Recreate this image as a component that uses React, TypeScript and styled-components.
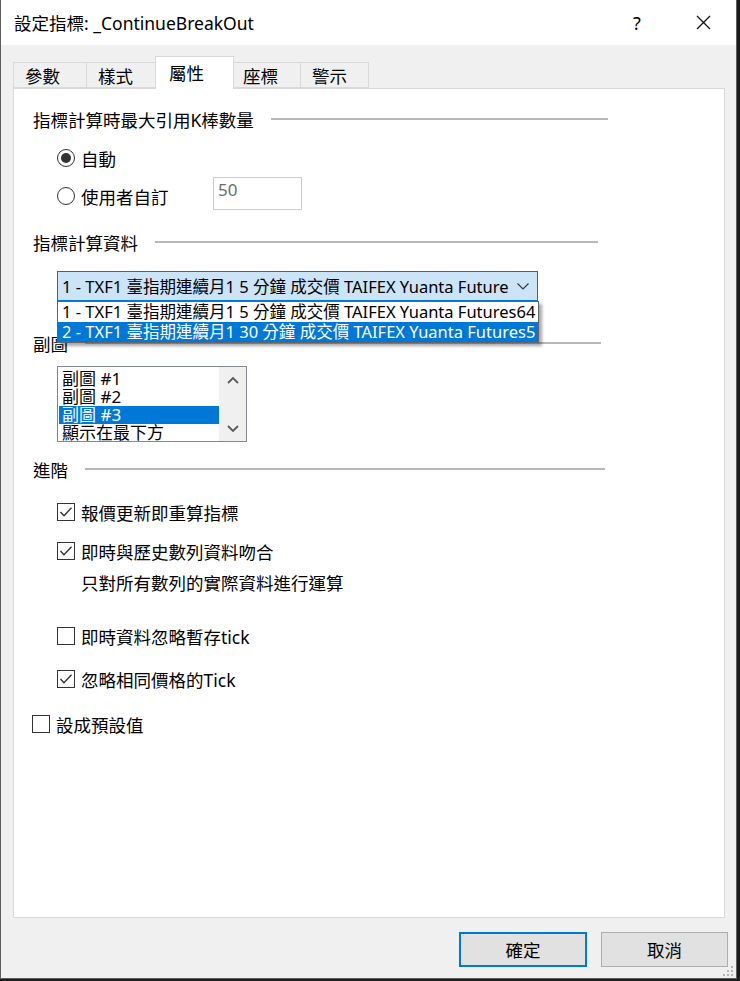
import React from 'react'
import styled, { createGlobalStyle } from 'styled-components'

const GlobalStyle = createGlobalStyle`
  html, body {
    margin: 0;
    padding: 0;
    background: #1c1c1c;
  }
  body {
    font-family: "Noto Sans", "Noto Sans CJK TC", sans-serif;
    color: #000;
  }
  * {
    box-sizing: border-box;
  }
`

const Screen = styled.div`
  width: 740px;
  height: 981px;
  overflow: hidden;
  background: #1c1c1c;
`

const Window = styled.div`
  position: relative;
  width: 737px;
  height: 979px;
  display: flex;
  flex-direction: column;
  background: #f0f0f0;
  border: 1px solid #5e5e5e;
  border-top: none;
`

const TitleBar = styled.div`
  height: 45px;
  flex: none;
  display: flex;
  align-items: center;
  background: #fff;
  padding-left: 13px;
`

const TitleText = styled.div`
  flex: 1;
  font-size: 17.5px;
  line-height: 22px;
  white-space: nowrap;
`

const CaptionButton = styled.div`
  width: 66px;
  height: 45px;
  display: flex;
  align-items: center;
  justify-content: center;
  font-size: 18px;
`

const Body = styled.div`
  flex: 1;
  display: flex;
  flex-direction: column;
  padding: 12px 11px 0 12px;
`

const TabStrip = styled.div`
  height: 31px;
  flex: none;
  display: flex;
  align-items: flex-end;
`

const Tab = styled.div<{ $width: number; $active?: boolean }>`
  position: relative;
  width: ${p => (p.$active ? p.$width + 3 : p.$width)}px;
  height: ${p => (p.$active ? 33 : 26)}px;
  margin-left: ${p => (p.$active ? -2 : -1)}px;
  margin-right: ${p => (p.$active ? -2 : 0)}px;
  margin-bottom: ${p => (p.$active ? -1 : 0)}px;
  z-index: ${p => (p.$active ? 2 : 1)};
  display: flex;
  align-items: center;
  padding-left: ${p => (p.$active ? 13 : 11)}px;
  padding-bottom: ${p => (p.$active ? 1 : 0)}px;
  background: ${p => (p.$active ? '#fff' : '#f0f0f0')};
  border: 1px solid #d9d9d9;
  border-bottom: ${p => (p.$active ? 'none' : '1px solid #d9d9d9')};
  font-size: 17.5px;
  &:first-child {
    margin-left: ${p => (p.$active ? -2 : 0)}px;
  }
`

const Panel = styled.div`
  flex: 1;
  position: relative;
  background: #fff;
  border: 1px solid #d9d9d9;
  padding-left: 19px;
  display: flex;
  flex-direction: column;
`

const Header = styled.div<{ $top: number; $end: number }>`
  display: flex;
  align-items: center;
  gap: 17px;
  height: 20px;
  margin-top: ${p => p.$top}px;
  width: ${p => p.$end - 33}px;
  font-size: 17.5px;
  white-space: nowrap;
`

const HeaderLine = styled.div`
  flex: 1;
  height: 2px;
  background: #b8b8b8;
`

const Row = styled.div<{ $top: number; $indent?: number; $height?: number }>`
  display: flex;
  align-items: flex-start;
  margin-top: ${p => p.$top}px;
  margin-left: ${p => p.$indent ?? 24}px;
  height: ${p => p.$height ?? 20}px;
`

const Choice = styled.label<{ $offset?: number; $width?: number }>`
  display: flex;
  align-items: center;
  gap: 6px;
  height: 20px;
  margin-top: ${p => p.$offset ?? 0}px;
  width: ${p => (p.$width ? `${p.$width}px` : 'auto')};
  font-size: 17.5px;
  white-space: nowrap;
`

const RadioCircle = styled.span<{ $on?: boolean }>`
  width: 18px;
  height: 18px;
  border-radius: 50%;
  border: 1px solid #333;
  display: flex;
  align-items: center;
  justify-content: center;
  flex: none;
  &::after {
    content: '';
    width: 10px;
    height: 10px;
    border-radius: 50%;
    background: ${p => (p.$on ? '#333' : 'transparent')};
  }
`

const CheckBox = styled.span`
  width: 18px;
  height: 18px;
  border: 1px solid #333;
  background: #fff;
  flex: none;
  display: flex;
  align-items: center;
  justify-content: center;
`

const NumberInput = styled.div`
  width: 89px;
  height: 33px;
  border: 1px solid #cccccc;
  background: #fff;
  color: #6d6d6d;
  font-size: 17px;
  line-height: 20px;
  padding: 2px 0 0 4px;
`

const SubText = styled.div`
  margin-top: 11px;
  margin-left: 48px;
  height: 20px;
  display: flex;
  align-items: center;
  font-size: 17.5px;
  white-space: nowrap;
`

const Combo = styled.div`
  position: relative;
  margin-top: 19px;
  margin-left: 24px;
  width: 481px;
  height: 30px;
  flex: none;
  background: #cce4f7;
  border: 1px solid #0078d7;
  display: flex;
  align-items: center;
  padding-left: 4px;
  font-size: 16.5px;
`

const ComboText = styled.div`
  flex: 1;
  white-space: nowrap;
  overflow: hidden;
`

const ComboArrow = styled.div`
  width: 28px;
  display: flex;
  justify-content: center;
`

const DropList = styled.div`
  position: absolute;
  left: -1px;
  top: calc(100% + 1px);
  width: 482px;
  border: 1px solid #646464;
  background: #fff;
  box-shadow: 3px 3px 3px rgba(0, 0, 0, 0.35);
  z-index: 5;
`

const DropItem = styled.div<{ $selected?: boolean }>`
  height: 20px;
  line-height: 20px;
  padding-left: 4px;
  white-space: nowrap;
  overflow: hidden;
  background: ${p => (p.$selected ? '#0078d7' : '#fff')};
  color: ${p => (p.$selected ? '#fff' : '#000')};
`

const ListBox = styled.div`
  margin-top: 13px;
  margin-left: 24px;
  width: 190px;
  height: 76px;
  flex: none;
  border: 1px solid #828790;
  display: flex;
  overflow: hidden;
`

const ListItems = styled.div`
  flex: 1;
  padding-top: 3px;
  overflow: hidden;
`

const ListItem = styled.div<{ $selected?: boolean }>`
  height: 18px;
  line-height: 18px;
  margin-left: 1px;
  padding-left: 3px;
  font-size: 17px;
  white-space: nowrap;
  background: ${p => (p.$selected ? '#0078d7' : 'transparent')};
  color: ${p => (p.$selected ? '#fff' : '#000')};
`

const ScrollBar = styled.div`
  width: 27px;
  background: #f0f0f0;
  display: flex;
  flex-direction: column;
  justify-content: space-between;
  align-items: center;
  padding: 9px 0 8px;
`

const Footer = styled.div`
  height: 60px;
  flex: none;
  display: flex;
  justify-content: flex-end;
  gap: 14px;
  padding: 14px 8px 0 0;
`

const Button = styled.div<{ $primary?: boolean }>`
  width: ${p => (p.$primary ? 128 : 127)}px;
  height: 35px;
  display: flex;
  align-items: center;
  justify-content: center;
  background: #e1e1e1;
  border: ${p => (p.$primary ? '2px solid #0078d7' : '1px solid #adadad')};
  font-size: 17.5px;
`

const Grip = styled.svg`
  position: absolute;
  right: 2px;
  bottom: 1px;
`

const Check = () => (
  <CheckBox>
    <svg width='14' height='12' viewBox='0 0 14 12'>
      <polyline points='1.5,6 5,9.8 12.5,1.8' fill='none' stroke='#333' strokeWidth='1.4' />
    </svg>
  </CheckBox>
)

const Chevron = ({ up }: { up?: boolean }) => (
  <svg width='12' height='8' viewBox='0 0 12 8'>
    <polyline
      points={up ? '1,7 6,2 11,7' : '1,1 6,6 11,1'}
      fill='none'
      stroke='#5a5a5a'
      strokeWidth='1.8'
    />
  </svg>
)

const tabs = [
  { label: '參數', width: 74 },
  { label: '樣式', width: 71 },
  { label: '屬性', width: 76, active: true },
  { label: '座標', width: 70 },
  { label: '警示', width: 69 },
]

const App: React.FC = () => (
  <Screen>
    <GlobalStyle />
    <Window>
      <TitleBar>
        <TitleText>設定指標: _ContinueBreakOut</TitleText>
        <CaptionButton>?</CaptionButton>
        <CaptionButton>
          <svg width='15' height='15' viewBox='0 0 15 15'>
            <path d='M1 1 L14 14 M14 1 L1 14' stroke='#111' strokeWidth='1.3' />
          </svg>
        </CaptionButton>
      </TitleBar>
      <Body>
        <TabStrip>
          {tabs.map(t => (
            <Tab key={t.label} $width={t.width} $active={t.active}>
              {t.label}
            </Tab>
          ))}
        </TabStrip>
        <Panel>
          <Header $top={20} $end={608}>
            指標計算時最大引用K棒數量
            <HeaderLine />
          </Header>
          <Row $top={19}>
            <Choice>
              <RadioCircle $on />
              自動
            </Choice>
          </Row>
          <Row $top={9} $height={33}>
            <Choice $offset={9} $width={156}>
              <RadioCircle />
              使用者自訂
            </Choice>
            <NumberInput>50</NumberInput>
          </Row>

          <Header $top={22} $end={598}>
            指標計算資料
            <HeaderLine />
          </Header>
          <Combo>
            <ComboText>1 - TXF1 臺指期連續月1 5 分鐘 成交價 TAIFEX Yuanta Futures64</ComboText>
            <ComboArrow>
              <svg width='12' height='7' viewBox='0 0 12 7'>
                <polyline points='0.5,0.5 6,6 11.5,0.5' fill='none' stroke='#333' strokeWidth='1.1' />
              </svg>
            </ComboArrow>
            <DropList>
              <DropItem>1 - TXF1 臺指期連續月1 5 分鐘 成交價 TAIFEX Yuanta Futures64 1min</DropItem>
              <DropItem $selected>2 - TXF1 臺指期連續月1 30 分鐘 成交價 TAIFEX Yuanta Futures5 min</DropItem>
            </DropList>
          </Combo>

          <Header $top={32} $end={601}>
            副圖
            <HeaderLine />
          </Header>
          <ListBox>
            <ListItems>
              <ListItem>副圖 #1</ListItem>
              <ListItem>副圖 #2</ListItem>
              <ListItem $selected>副圖 #3</ListItem>
              <ListItem>顯示在最下方</ListItem>
            </ListItems>
            <ScrollBar>
              <Chevron up />
              <Chevron />
            </ScrollBar>
          </ListBox>

          <Header $top={17} $end={605}>
            進階
            <HeaderLine />
          </Header>
          <Row $top={23}>
            <Choice>
              <Check />
              報價更新即重算指標
            </Choice>
          </Row>
          <Row $top={19}>
            <Choice>
              <Check />
              即時與歷史數列資料吻合
            </Choice>
          </Row>
          <SubText>只對所有數列的實際資料進行運算</SubText>
          <Row $top={34}>
            <Choice>
              <CheckBox />
              即時資料忽略暫存tick
            </Choice>
          </Row>
          <Row $top={23}>
            <Choice>
              <Check />
              忽略相同價格的Tick
            </Choice>
          </Row>
          <Row $top={25} $indent={-1}>
            <Choice>
              <CheckBox />
              設成預設值
            </Choice>
          </Row>
        </Panel>
      </Body>
      <Footer>
        <Button $primary>確定</Button>
        <Button>取消</Button>
      </Footer>
      <Grip width='12' height='12' viewBox='0 0 12 12'>
        {[
          [9, 1],
          [5, 5],
          [9, 5],
          [1, 9],
          [5, 9],
          [9, 9],
        ].map(([x, y]) => (
          <rect key={`${x}-${y}`} x={x} y={y} width='2' height='2' fill='#b5b5b5' />
        ))}
      </Grip>
    </Window>
  </Screen>
)

export default App
